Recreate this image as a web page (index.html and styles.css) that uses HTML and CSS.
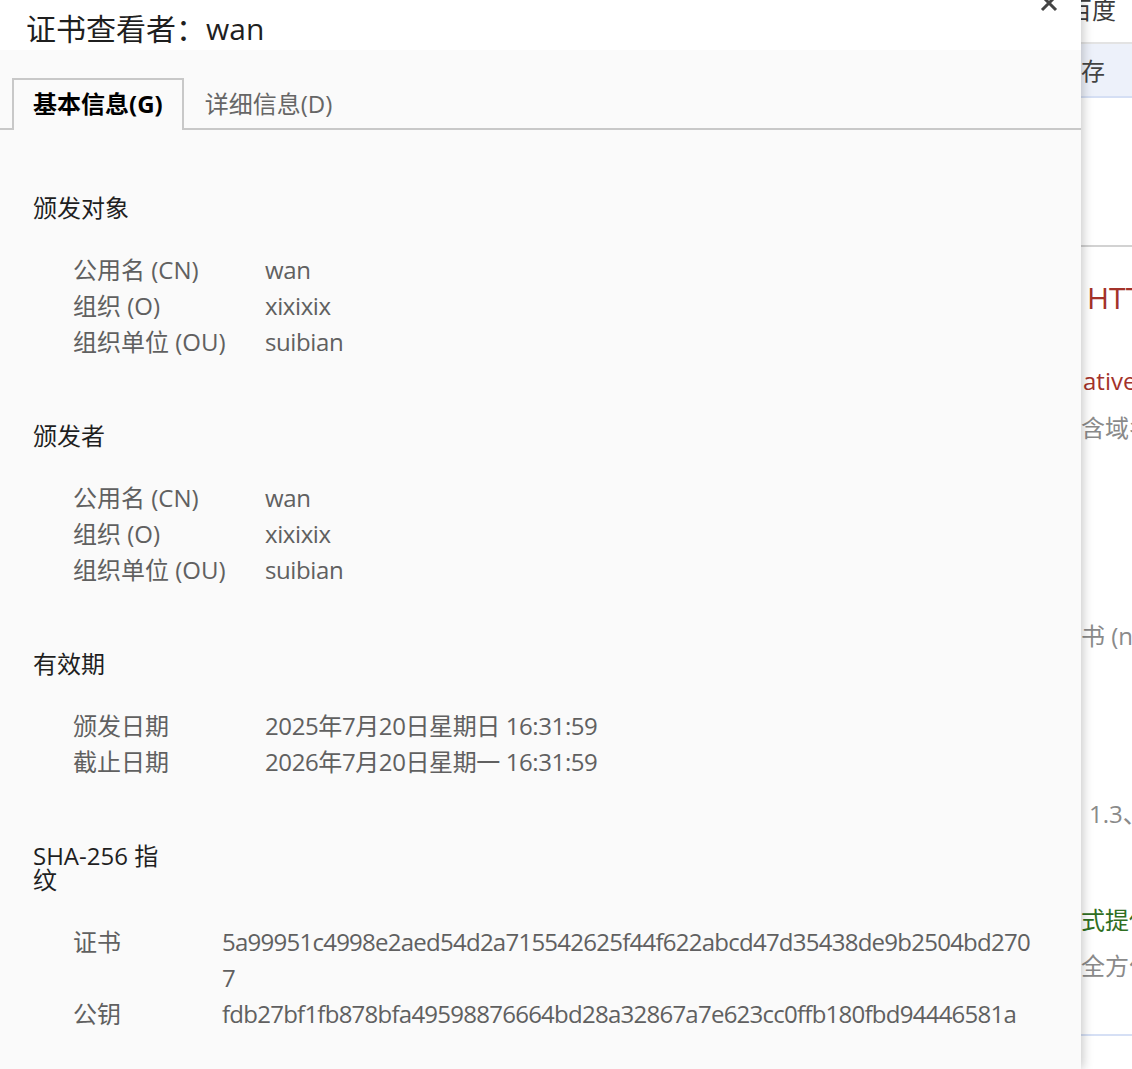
FILE: index.html
```html
<!DOCTYPE html>
<html lang="zh-CN">
<head>
    <meta charset="UTF-8">
    <title>证书查看者：wan</title>
    <link rel="stylesheet" href="styles.css">
</head>
<body>
    <!-- 背后的网页 -->
    <div class="site">
        <div class="site-top">
            <div class="site-brand">百度</div>
        </div>
        <div class="site-nav">保存</div>
        <div class="site-rule"></div>
        <div class="site-line site-title">HTTPS</div>
        <div class="site-line site-red">ative Name</div>
        <div class="site-line site-gray site-l3">含域名</div>
        <div class="site-line site-gray site-l4">书 (n</div>
        <div class="site-line site-gray site-l5">1.3、</div>
        <div class="site-line site-green">式提供</div>
        <div class="site-line site-gray site-l7">全方位</div>
        <div class="site-rule-blue"></div>
    </div>

    <!-- 证书对话框 -->
    <div class="dialog">
        <div class="dialog-header">
            <h1 class="dialog-title">证书查看者：wan</h1>
            <button class="dialog-close" title="关闭">
                <svg width="18" height="18" viewBox="0 0 18 18">
                    <path d="M2 2 L16 16 M16 2 L2 16" stroke="#444" stroke-width="3" fill="none"/>
                </svg>
            </button>
        </div>

        <div class="dialog-body">
            <div class="tabs">
                <div class="tab active">基本信息(G)</div>
                <div class="tab">详细信息(D)</div>
            </div>

            <div class="tab-content">
                <section class="cert-section">
                    <h2 class="section-title">颁发对象</h2>
                    <div class="field-grid">
                        <span class="field-label">公用名 (CN)</span><span class="field-value">wan</span>
                        <span class="field-label">组织 (O)</span><span class="field-value">xixixix</span>
                        <span class="field-label">组织单位 (OU)</span><span class="field-value">suibian</span>
                    </div>
                </section>

                <section class="cert-section">
                    <h2 class="section-title">颁发者</h2>
                    <div class="field-grid">
                        <span class="field-label">公用名 (CN)</span><span class="field-value">wan</span>
                        <span class="field-label">组织 (O)</span><span class="field-value">xixixix</span>
                        <span class="field-label">组织单位 (OU)</span><span class="field-value">suibian</span>
                    </div>
                </section>

                <section class="cert-section">
                    <h2 class="section-title">有效期</h2>
                    <div class="field-grid">
                        <span class="field-label">颁发日期</span><span class="field-value">2025年7月20日星期日 16:31:59</span>
                        <span class="field-label">截止日期</span><span class="field-value">2026年7月20日星期一 16:31:59</span>
                    </div>
                </section>

                <section class="cert-section">
                    <h2 class="section-title">SHA-256 指纹</h2>
                    <div class="field-grid narrow">
                        <span class="field-label">证书</span><span class="field-value hash">5a99951c4998e2aed54d2a715542625f44f622abcd47d35438de9b2504bd2707</span>
                        <span class="field-label">公钥</span><span class="field-value hash">fdb27bf1fb878bfa49598876664bd28a32867a7e623cc0ffb180fbd94446581a</span>
                    </div>
                </section>
            </div>
        </div>
    </div>
</body>
</html>
```

FILE: styles.css
```css
body {
    margin: 0;
    padding: 0;
    font-family: 'Open Sans', 'Noto Sans CJK SC', sans-serif;
    background: #ffffff;
    overflow: hidden;
    height: 1069px;
}

/* 背后的网页 */
.site {
    font-size: 24px;
    white-space: nowrap;
    overflow: hidden;
}

.site-top {
    height: 46px;
    border-bottom: 2px solid #e3e3e3;
    box-sizing: border-box;
}

.site-brand {
    padding-left: 1068px;
    line-height: 24px;
    margin-top: -2px;
    color: #3a3a3a;
}

.site-nav {
    height: 52px;
    line-height: 54px;
    background: #edf1fa;
    border-bottom: 2px solid #d5dff4;
    padding-left: 1057px;
    color: #444;
}

.site-rule {
    margin-top: 147px;
    height: 2px;
    background: #d2d2d2;
}

.site-line {
    line-height: 36px;
}

.site-title {
    font-size: 30px;
    line-height: 40px;
    margin-top: 31px;
    padding-left: 1087px;
    color: #a3322a;
}

.site-red {
    margin-top: 45px;
    padding-left: 1083px;
    color: #a3322a;
}

.site-gray {
    color: #8a8a8a;
    padding-left: 1081px;
}

.site-l3 { margin-top: 11px; }
.site-l4 { margin-top: 172px; }
.site-l5 { margin-top: 142px; padding-left: 1089px; }
.site-l7 { margin-top: 10px; }

.site-green {
    margin-top: 70px;
    padding-left: 1081px;
    color: #2f6e22;
}

.site-rule-blue {
    margin-top: 50px;
    height: 2px;
    background: #d6e0f5;
}

/* 对话框 */
.dialog {
    position: absolute;
    top: 0;
    left: 0;
    width: 1081px;
    height: 1069px;
    background: #fafafa;
    box-shadow: 2px 0 10px rgba(0, 0, 0, 0.22);
    display: flex;
    flex-direction: column;
    overflow: hidden;
}

.dialog-header {
    background: #ffffff;
    height: 50px;
    flex-shrink: 0;
    display: flex;
    justify-content: space-between;
    align-items: flex-start;
}

.dialog-title {
    margin: 0;
    padding: 11px 0 0 26px;
    font-size: 30px;
    line-height: 36px;
    font-weight: normal;
    color: #1f1f1f;
}

.dialog-close {
    border: none;
    background: transparent;
    padding: 0;
    margin: -6px 23px 0 0;
    width: 18px;
    height: 18px;
    cursor: pointer;
}

.dialog-body {
    flex: 1;
}

.tabs {
    display: flex;
    margin-top: 28px;
    padding-left: 12px;
    border-bottom: 2px solid #c8c8c8;
}

.tab {
    font-size: 24px;
    line-height: 48px;
    padding: 0 19px;
    border: 2px solid transparent;
    border-bottom: none;
    color: #666666;
}

.tab.active {
    font-weight: bold;
    color: #000000;
    border-color: #c8c8c8;
    background: #fafafa;
    margin-bottom: -2px;
    padding-bottom: 2px;
}

.tab-content {
    padding-top: 66px;
}

.cert-section {
    margin-bottom: 64px;
}

.section-title {
    margin: 0 0 32px 33px;
    max-width: 136px;
    font-size: 24px;
    line-height: 24px;
    font-weight: normal;
    color: #1f1f1f;
}

.field-grid {
    display: grid;
    grid-template-columns: 192px 1fr;
    padding-left: 73px;
    font-size: 24px;
    line-height: 36px;
    color: #606060;
}

.field-value {
    letter-spacing: -0.4px;
}

.field-grid.narrow {
    grid-template-columns: 149px 812px;
}

.hash {
    word-break: break-all;
    letter-spacing: -0.75px;
}
```
